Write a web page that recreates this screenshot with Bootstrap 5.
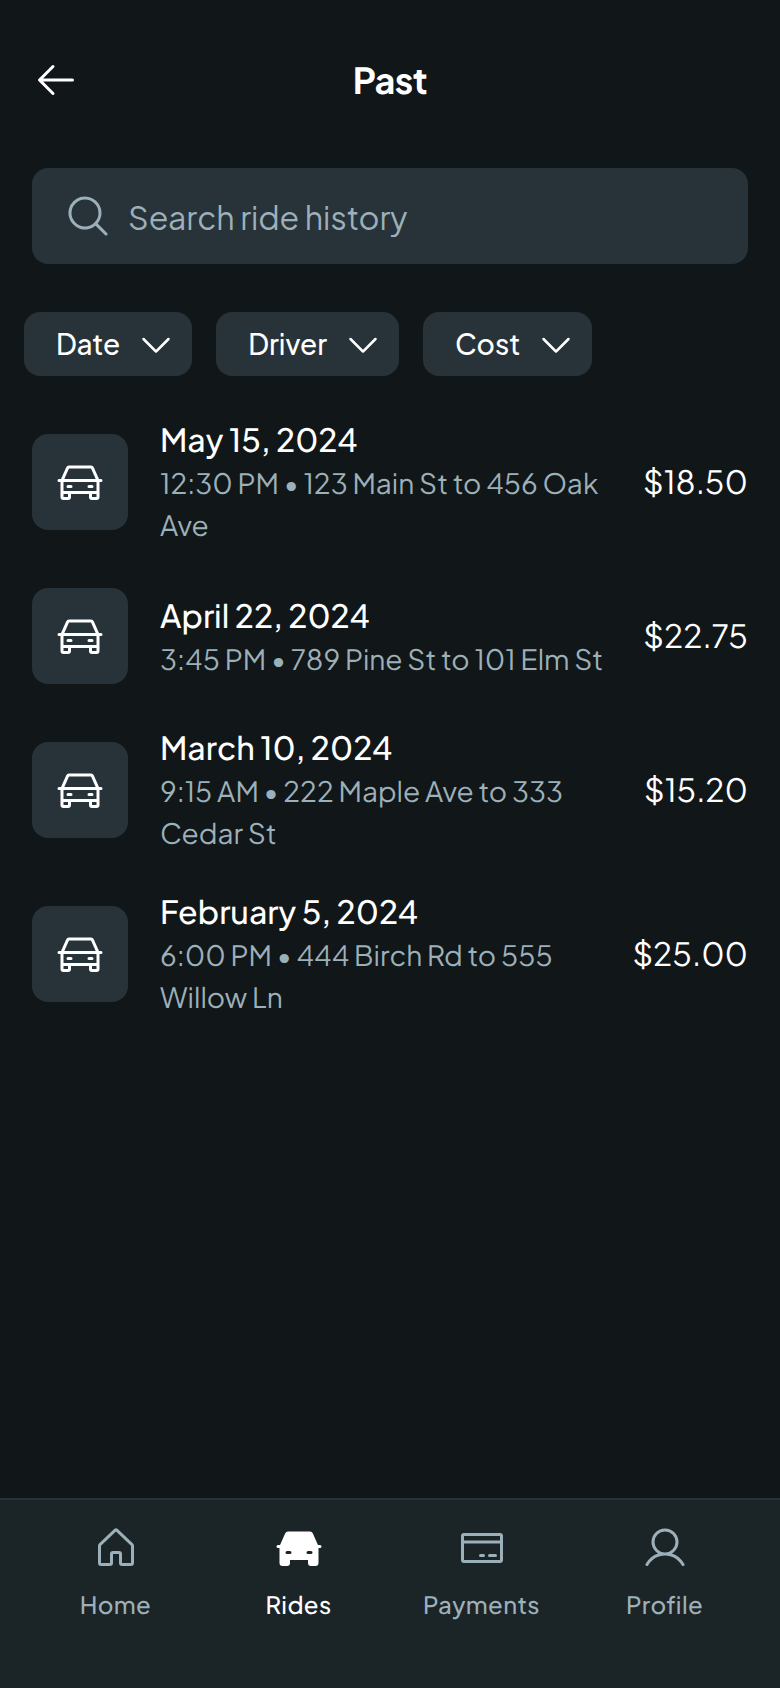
<!DOCTYPE html>
<html lang="en">
<head>
<meta charset="utf-8">
<meta name="viewport" content="width=device-width, initial-scale=1">
<title>Past rides</title>
<link href="https://cdn.jsdelivr.net/npm/bootstrap@5.3.0/dist/css/bootstrap.min.css" rel="stylesheet">
<style>
  :root { --ink: #111618; --tile: #283339; --bar: #1b2427; --muted-text: #9cb0ba; }
  body { background: var(--ink); color: #fff; font-family: "Plus Jakarta Sans", Inter, "Noto Sans", sans-serif; text-rendering: geometricPrecision; }
  svg { fill: currentColor; flex: none; display: block; }
  .ico { width: 48px; height: 48px; }
  .ico-sm { width: 40px; height: 40px; }
  .soft { color: var(--muted-text); }
  .top-bar { height: 136px; padding: 48px 32px 24px; }
  .top-bar h1 { font-size: 36px; line-height: 46px; font-weight: 700; letter-spacing: -.54px; padding-right: 48px; }
  .search-wrap { padding: 32px 32px 24px; }
  .search-box { height: 96px; padding: 0 32px; border-radius: 16px; background: var(--tile); }
  .search-box input { font-size: 32px; line-height: 48px; padding: 2px 0 0 16px; color: #fff; }
  .search-box input::placeholder { color: var(--muted-text); opacity: 1; }
  .search-box input:focus { box-shadow: none; }
  .filters { padding: 24px; gap: 24px; }
  .chip { height: 64px; padding: 0 16px 0 32px; gap: 16px; border: 0; border-radius: 16px; background: var(--tile); color: #fff; font-size: 28px; line-height: 42px; font-weight: 500; white-space: nowrap; }
  .chip span { padding-bottom: 1px; }
  .ride { min-height: 144px; padding: 16px 32px; gap: 32px; }
  .ride-icon { width: 96px; height: 96px; border-radius: 16px; background: var(--tile); flex: none; }
  .ride-date { font-size: 32px; line-height: 46px; font-weight: 500; padding-top: 1px; }
  .ride-trip { font-size: 28px; line-height: 42px; padding-bottom: 1px; }
  .ride-short .ride-date { padding-top: 2px; }
  .ride-short .ride-trip { padding-bottom: 0; }
  .ride-cost { font-size: 32px; line-height: 48px; }
  .tabs { height: 190px; border-top: 2px solid var(--tile); background: var(--bar); padding: 16px 32px 0; gap: 16px; }
  .tab { flex: 1 1 0; gap: 7px; text-decoration: none; color: var(--muted-text); }
  .tab.active { color: #fff; }
  .tab-icon { height: 64px; }
  .tab-name { font-size: 24px; line-height: 36px; font-weight: 500; letter-spacing: .36px; }
</style>
</head>
<body class="min-vh-100 d-flex flex-column">

<svg class="d-none" aria-hidden="true">
  <symbol id="car" viewBox="0 0 256 256"><path d="M240,112H229.2L201.42,49.5A16,16,0,0,0,186.8,40H69.2a16,16,0,0,0-14.62,9.5L26.8,112H16a8,8,0,0,0,0,16h8v80a16,16,0,0,0,16,16H64a16,16,0,0,0,16-16V192h96v16a16,16,0,0,0,16,16h24a16,16,0,0,0,16-16V128h8a8,8,0,0,0,0-16ZM69.2,56H186.8l24.89,56H44.31ZM64,208H40V192H64Zm128,0V192h24v16Zm24-32H40V128H216ZM56,152a8,8,0,0,1,8-8H80a8,8,0,0,1,0,16H64A8,8,0,0,1,56,152Zm112,0a8,8,0,0,1,8-8h16a8,8,0,0,1,0,16H176A8,8,0,0,1,168,152Z"/></symbol>
  <symbol id="caret" viewBox="0 0 256 256"><path d="M213.66,101.66l-80,80a8,8,0,0,1-11.32,0l-80-80A8,8,0,0,1,53.66,90.34L128,164.69l74.34-74.35a8,8,0,0,1,11.32,11.32Z"/></symbol>
</svg>

<header class="top-bar d-flex align-items-center">
  <svg class="ico" viewBox="0 0 256 256" role="img" aria-label="Back"><path d="M224,128a8,8,0,0,1-8,8H59.31l58.35,58.34a8,8,0,0,1-11.32,11.32l-72-72a8,8,0,0,1,0-11.32l72-72a8,8,0,0,1,11.32,11.32L59.31,120H216A8,8,0,0,1,224,128Z"/></svg>
  <h1 class="flex-fill text-center m-0">Past</h1>
</header>

<div class="search-wrap">
  <div class="search-box d-flex align-items-center">
    <svg class="ico soft" viewBox="0 0 256 256"><path d="M229.66,218.34l-50.07-50.06a88.11,88.11,0,1,0-11.31,11.31l50.06,50.07a8,8,0,0,0,11.32-11.32ZM40,112a72,72,0,1,1,72,72A72.08,72.08,0,0,1,40,112Z"/></svg>
    <input class="form-control border-0 bg-transparent rounded-0" type="text" placeholder="Search ride history">
  </div>
</div>

<div class="filters d-flex">
  <button class="chip d-flex align-items-center" type="button"><span>Date</span><svg class="ico-sm"><use href="#caret"/></svg></button>
  <button class="chip d-flex align-items-center" type="button"><span>Driver</span><svg class="ico-sm"><use href="#caret"/></svg></button>
  <button class="chip d-flex align-items-center" type="button"><span>Cost</span><svg class="ico-sm"><use href="#caret"/></svg></button>
</div>

<main class="flex-fill">
  <div class="ride d-flex align-items-center">
    <div class="ride-icon d-flex align-items-center justify-content-center"><svg class="ico"><use href="#car"/></svg></div>
    <div class="flex-fill"><div class="ride-date">May 15, 2024</div><div class="ride-trip soft">12:30 PM • 123 Main St to 456 Oak Ave</div></div>
    <div class="ride-cost">$18.50</div>
  </div>
  <div class="ride ride-short d-flex align-items-center">
    <div class="ride-icon d-flex align-items-center justify-content-center"><svg class="ico"><use href="#car"/></svg></div>
    <div class="flex-fill"><div class="ride-date">April 22, 2024</div><div class="ride-trip soft">3:45 PM • 789 Pine St to 101 Elm St</div></div>
    <div class="ride-cost">$22.75</div>
  </div>
  <div class="ride d-flex align-items-center">
    <div class="ride-icon d-flex align-items-center justify-content-center"><svg class="ico"><use href="#car"/></svg></div>
    <div class="flex-fill"><div class="ride-date">March 10, 2024</div><div class="ride-trip soft">9:15 AM • 222 Maple Ave to 333 Cedar St</div></div>
    <div class="ride-cost">$15.20</div>
  </div>
  <div class="ride d-flex align-items-center">
    <div class="ride-icon d-flex align-items-center justify-content-center"><svg class="ico"><use href="#car"/></svg></div>
    <div class="flex-fill"><div class="ride-date">February 5, 2024</div><div class="ride-trip soft">6:00 PM • 444 Birch Rd to 555 Willow Ln</div></div>
    <div class="ride-cost">$25.00</div>
  </div>
</main>

<nav class="tabs d-flex">
  <a class="tab d-flex flex-column align-items-center" href="#">
    <span class="tab-icon d-flex align-items-center"><svg class="ico" viewBox="0 0 256 256"><path d="M218.83,103.77l-80-75.48a1.14,1.14,0,0,1-.11-.11,16,16,0,0,0-21.53,0l-.11.11L37.17,103.77A16,16,0,0,0,32,115.55V208a16,16,0,0,0,16,16H96a16,16,0,0,0,16-16V160h32v48a16,16,0,0,0,16,16h48a16,16,0,0,0,16-16V115.55A16,16,0,0,0,218.83,103.77ZM208,208H160V160a16,16,0,0,0-16-16H112a16,16,0,0,0-16,16v48H48V115.55l.11-.1L128,40l79.9,75.43.11.1Z"/></svg></span>
    <span class="tab-name">Home</span>
  </a>
  <a class="tab active d-flex flex-column align-items-center" href="#">
    <span class="tab-icon d-flex align-items-center"><svg class="ico" viewBox="0 0 256 256"><path fill-rule="evenodd" d="M240,112H229.2L201.42,49.5A16,16,0,0,0,186.8,40H69.2a16,16,0,0,0-14.62,9.5L26.8,112H16a8,8,0,0,0,0,16h8v80a16,16,0,0,0,16,16H64a16,16,0,0,0,16-16V192h96v16a16,16,0,0,0,16,16h24a16,16,0,0,0,16-16V128h8a8,8,0,0,0,0-16ZM56,152a8,8,0,0,1,8-8H80a8,8,0,0,1,0,16H64A8,8,0,0,1,56,152Zm112,0a8,8,0,0,1,8-8h16a8,8,0,0,1,0,16H176A8,8,0,0,1,168,152Z"/></svg></span>
    <span class="tab-name">Rides</span>
  </a>
  <a class="tab d-flex flex-column align-items-center" href="#">
    <span class="tab-icon d-flex align-items-center"><svg class="ico" viewBox="0 0 256 256"><path d="M224,48H32A16,16,0,0,0,16,64V192a16,16,0,0,0,16,16H224a16,16,0,0,0,16-16V64A16,16,0,0,0,224,48Zm0,16V88H32V64Zm0,128H32V104H224v88Zm-16-24a8,8,0,0,1-8,8H168a8,8,0,0,1,0-16h32A8,8,0,0,1,208,168Zm-64,0a8,8,0,0,1-8,8H120a8,8,0,0,1,0-16h16A8,8,0,0,1,144,168Z"/></svg></span>
    <span class="tab-name">Payments</span>
  </a>
  <a class="tab d-flex flex-column align-items-center" href="#">
    <span class="tab-icon d-flex align-items-center"><svg class="ico" viewBox="0 0 256 256"><path d="M230.92,212c-15.23-26.33-38.7-45.21-66.09-54.16a72,72,0,1,0-73.66,0C63.78,166.78,40.31,185.66,25.08,212a8,8,0,1,0,13.85,8c18.84-32.56,52.14-52,89.07-52s70.23,19.44,89.07,52a8,8,0,1,0,13.85-8ZM72,96a56,56,0,1,1,56,56A56.06,56.06,0,0,1,72,96Z"/></svg></span>
    <span class="tab-name">Profile</span>
  </a>
</nav>

<script src="https://cdn.jsdelivr.net/npm/bootstrap@5.3.0/dist/js/bootstrap.bundle.min.js"></script>
</body>
</html>
